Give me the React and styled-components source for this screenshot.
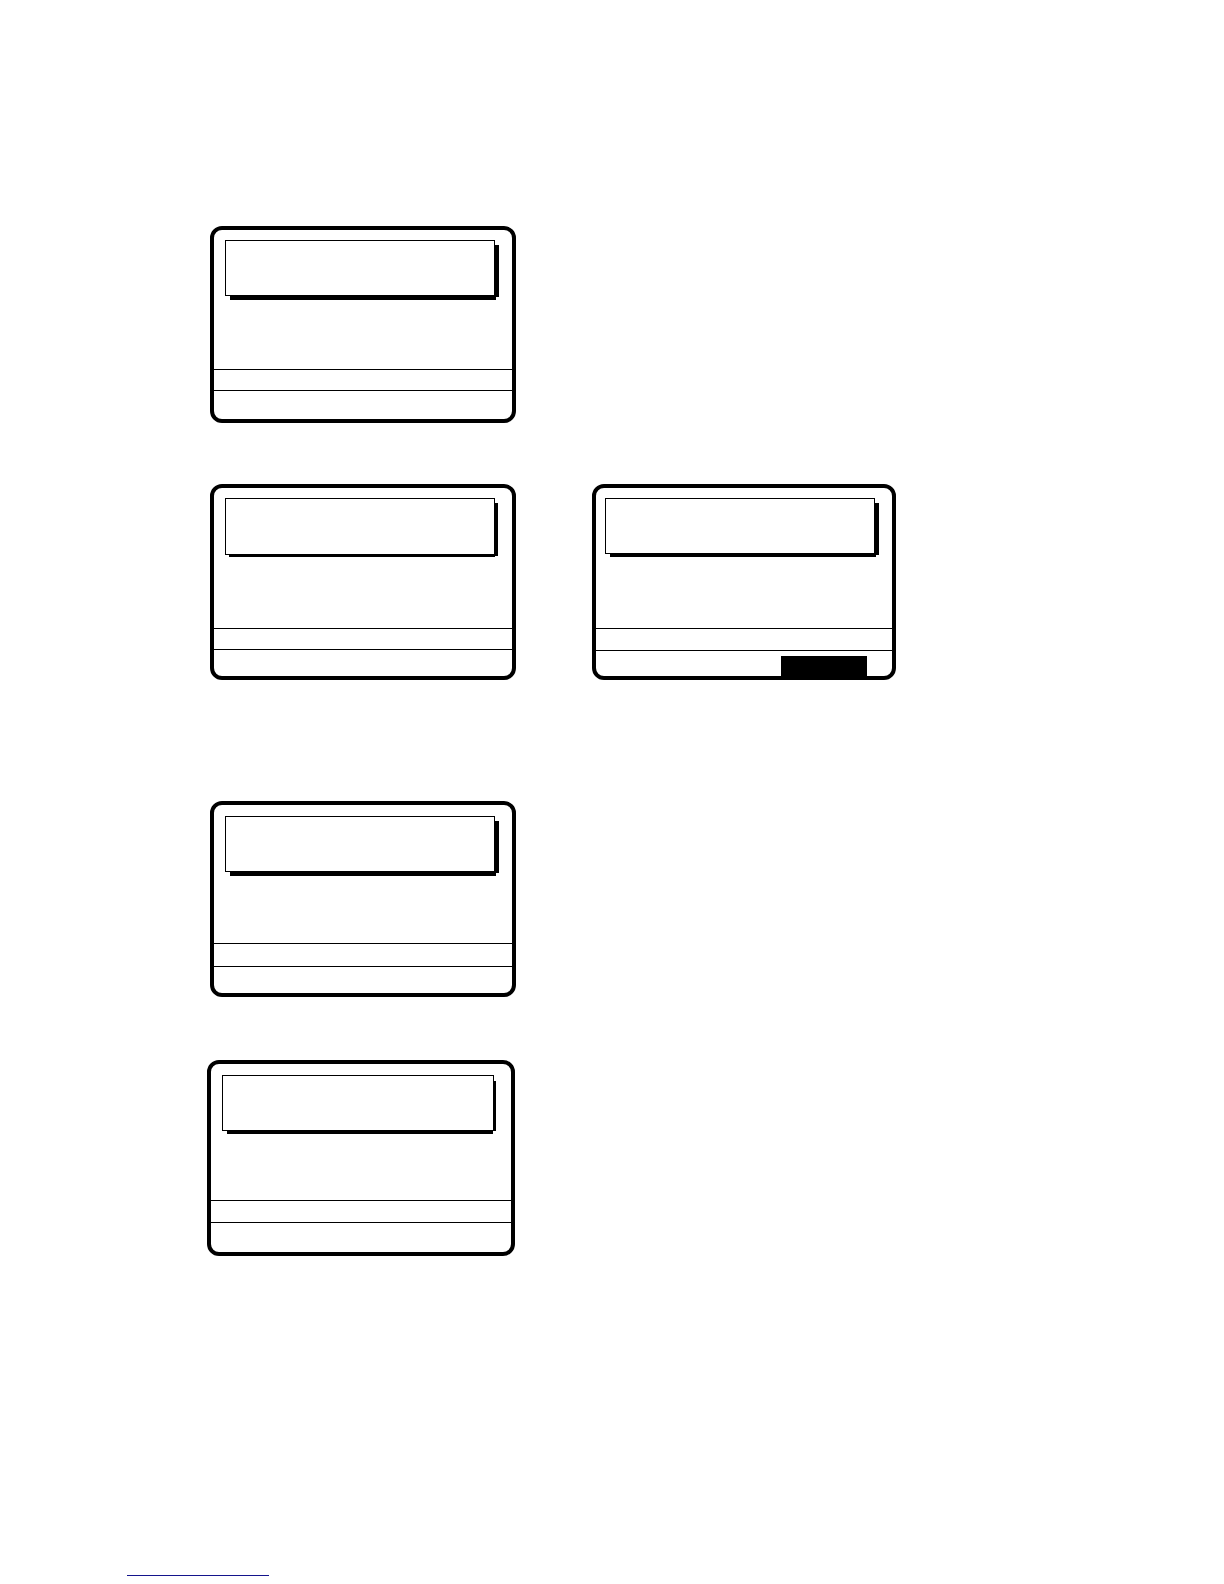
import React from "react";
import styled, { createGlobalStyle } from "styled-components";

const GlobalStyle = createGlobalStyle`
  * {
    box-sizing: border-box;
  }

  body {
    margin: 0;
    background: #fff;
    color: #000;
    font-family: "Liberation Sans", sans-serif;
  }
`;

const Page = styled.main`
  display: flex;
  flex-direction: column;
  padding-bottom: 8px;
`;

const Row = styled.section`
  display: grid;
  grid-template-columns: 306fr 304fr;
  column-gap: 76px;
  margin-top: ${(props) => props.$top}px;
  padding-left: ${(props) => (props.$wide ? 207 : 210)}px;
  padding-right: ${(props) => (props.$wide ? 327 : 328)}px;
`;

const Screen = styled.article`
  display: flex;
  flex-direction: column;
  border: 4px solid #000;
  border-radius: 12px;
`;

/* one shadow for the bottom edge, one for the right edge */
const TitleBox = styled.header`
  height: ${(props) => props.$height}px;
  margin: ${(props) => props.$inset};
  border: 1px solid #000;
  background: #fff;
  box-shadow: ${(props) => props.$shadow};
`;

const Message = styled.div`
  height: ${(props) => props.$height}px;
`;

const StatusBar = styled.div`
  height: ${(props) => props.$height}px;
  border-top: 1px solid #000;
  border-bottom: 1px solid #000;
`;

const KeyBar = styled.footer`
  display: flex;
  justify-content: flex-end;
  height: ${(props) => props.$height}px;
  padding: 5px 25px 0 0;
`;

const SoftKey = styled.button`
  width: 86px;
  padding: 0;
  border: 0;
  background: #000;
`;

const PageFooter = styled.footer`
  display: flex;
  margin-top: 300px;
  padding-left: 127px;
`;

const FooterLink = styled.a`
  width: 142px;
  height: 20px;
  border-bottom: 1px solid #14148c;
`;

const deepShadow = "3px 6px 0 -2px #000, 6px 3px 0 -2px #000";

const rows = [
  {
    top: 226,
    screens: [
      { inset: "10px 17px 0 11px", title: 56, shadow: deepShadow, message: 73, status: 22, keys: 28 },
    ],
  },
  {
    top: 61,
    screens: [
      {
        inset: "10px 17px 0 11px",
        title: 57,
        shadow: "2px 4px 0 -2px #000, 5px 3px 0 -2px #000",
        message: 73,
        status: 22,
        keys: 26,
      },
      {
        inset: "10px 17px 0 9px",
        title: 56,
        shadow: "3px 5px 0 -2px #000, 6px 3px 0 -2px #000",
        message: 74,
        status: 23,
        keys: 25,
        softKey: true,
      },
    ],
  },
  {
    top: 121,
    screens: [
      { inset: "11px 17px 0 11px", title: 56, shadow: deepShadow, message: 71, status: 24, keys: 26 },
    ],
  },
  {
    top: 63,
    wide: true,
    screens: [
      {
        inset: "11px 17px 0 11px",
        title: 56,
        shadow: "2px 6px 0 -3px #000, 5px 3px 0 -3px #000",
        message: 69,
        status: 23,
        keys: 29,
      },
    ],
  },
];

const Display = (props) => {
  const { inset, title, shadow, message, status, keys, softKey } = props;
  return (
    <Screen>
      <TitleBox $inset={inset} $height={title} $shadow={shadow} />
      <Message $height={message} />
      <StatusBar $height={status} />
      <KeyBar $height={keys}>
        {softKey && <SoftKey type="button" aria-label="Soft key" />}
      </KeyBar>
    </Screen>
  );
};

const App = () => (
  <>
    <GlobalStyle />
    <Page>
      {rows.map((row, i) => (
        <Row key={i} $top={row.top} $wide={row.wide}>
          {row.screens.map((screen, j) => (
            <Display key={j} {...screen} />
          ))}
        </Row>
      ))}
      <PageFooter>
        <FooterLink href="#" aria-label="Website" />
      </PageFooter>
    </Page>
  </>
);

export default App;
